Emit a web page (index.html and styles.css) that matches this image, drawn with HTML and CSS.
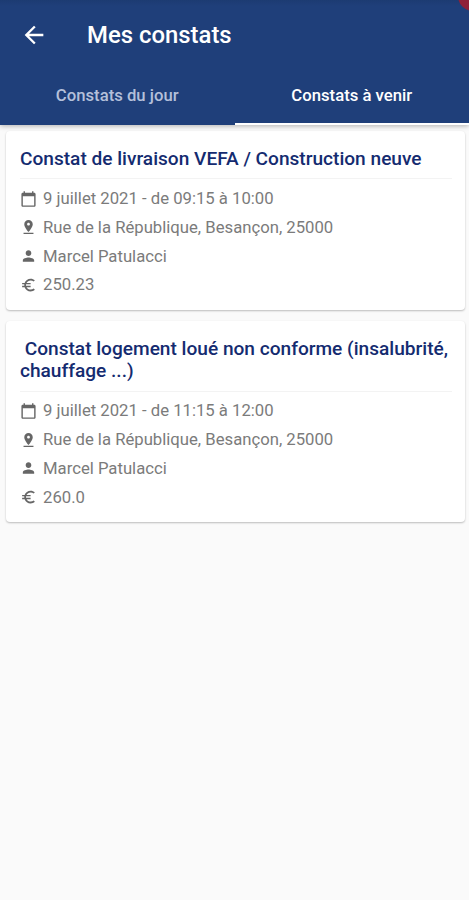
FILE: index.html
```html
<!DOCTYPE html>
<html lang="fr">
<head>
  <meta charset="UTF-8" />
  <meta name="viewport" content="width=device-width, initial-scale=1" />
  <title>Mes constats</title>
  <link rel="stylesheet" href="styles.css">
</head>
<body>
  <svg class="sprite" aria-hidden="true">
    <symbol id="icon-date" viewBox="0 0 24 24"><path d="M20 3h-1V1h-2v2H7V1H5v2H4c-1.1 0-2 .9-2 2v16c0 1.1.9 2 2 2h16c1.1 0 2-.9 2-2V5c0-1.1-.9-2-2-2zm0 18H4V8h16v13z"/></symbol>
    <symbol id="icon-place" viewBox="0 0 24 24"><path d="M18 8c0-3.310-2.690-6-6-6S6 4.690 6 8c0 4.500 6 11 6 11s6-6.500 6-11zm-8 0c0-1.100.9-2 2-2s2 .9 2 2-.890 2-2 2c-1.100 0-2-.9-2-2zM5 20v2h14v-2H5z"/></symbol>
    <symbol id="icon-person" viewBox="0 0 24 24"><path d="M12 12c2.210 0 4-1.790 4-4s-1.790-4-4-4-4 1.790-4 4 1.790 4 4 4zm0 2c-2.670 0-8 1.340-8 4v2h16v-2c0-2.660-5.330-4-8-4z"/></symbol>
    <symbol id="icon-euro" viewBox="0 0 24 24"><path d="M15 18.500c-2.510 0-4.680-1.420-5.760-3.500H15v-2H8.580c-.050-.330-.080-.660-.080-1s.030-.670.080-1H15V9H9.240C10.320 6.920 12.500 5.500 15 5.500c1.610 0 3.090.590 4.230 1.570L21 5.300C19.410 3.870 17.300 3 15 3c-3.920 0-7.240 2.510-8.480 6H3v2h3.060c-.040.330-.060.660-.060 1s.020.670.060 1H3v2h3.520c1.240 3.490 4.560 6 8.480 6 2.310 0 4.410-.870 6-2.300l-1.780-1.770c-1.130.980-2.600 1.570-4.220 1.570z"/></symbol>
  </svg>

  <header>
    <div class="corner-mark"></div>
    <div class="toolbar">
      <svg class="back" viewBox="0 0 24 24"><path d="M20 11H7.830l5.590-5.590L12 4l-8 8 8 8 1.410-1.410L7.830 13H20v-2z"/></svg>
      <h1>Mes constats</h1>
    </div>
    <nav class="tabs">
      <a class="tab">Constats du jour</a>
      <a class="tab active">Constats à venir</a>
    </nav>
  </header>

  <main>
    <article class="card">
      <h2>Constat de livraison VEFA / Construction neuve</h2>
      <ul>
        <li><svg><use href="#icon-date"/></svg><span>9 juillet 2021 - de 09:15 à 10:00</span></li>
        <li><svg><use href="#icon-place"/></svg><span>Rue de la République, Besançon, 25000</span></li>
        <li><svg><use href="#icon-person"/></svg><span>Marcel Patulacci</span></li>
        <li><svg><use href="#icon-euro"/></svg><span>250.23</span></li>
      </ul>
    </article>

    <article class="card">
      <h2>&nbsp;Constat logement loué non conforme (insalubrité, chauffage ...)</h2>
      <ul>
        <li><svg><use href="#icon-date"/></svg><span>9 juillet 2021 - de 11:15 à 12:00</span></li>
        <li><svg><use href="#icon-place"/></svg><span>Rue de la République, Besançon, 25000</span></li>
        <li><svg><use href="#icon-person"/></svg><span>Marcel Patulacci</span></li>
        <li><svg><use href="#icon-euro"/></svg><span>260.0</span></li>
      </ul>
    </article>
  </main>
</body>
</html>
```
FILE: styles.css
```css
:root {
  --primary-color: #1f3f7a;
  --title-color: #142b70;
  --background-color: #fafafa;
  --text-color: #7b7b7b;
  --icon-color: #666;
}
* {
  box-sizing: border-box;
}
body {
  margin: 0;
  min-height: 100vh;
  font-family: Roboto, sans-serif;
  background: var(--background-color);
  color: var(--text-color);
}
.sprite {
  display: none;
}
header {
  position: relative;
  overflow: hidden;
  height: 125px;
  background: linear-gradient(#1c3b72, var(--primary-color) 6px);
  box-shadow: 0 1px 5px rgba(0,0,0,0.3);
  color: white;
}
main {
  display: flex;
  flex-direction: column;
  gap: 11px;
  padding: 6px 4px 0 6px;
}
.corner-mark {
  position: absolute;
  top: -19px;
  right: -19px;
  width: 30px;
  height: 30px;
  border-radius: 50%;
  background: #8f2038;
}
.toolbar {
  display: flex;
  align-items: center;
  height: 68px;
  padding: 2px 0 0 20px;
}
.back {
  width: 28px;
  height: 28px;
  fill: white;
}
h1 {
  margin: 0 0 0 39px;
  font-size: 23.9px;
  font-weight: 500;
  line-height: 28px;
}
.tabs {
  display: flex;
  height: 57px;
}
.tab {
  flex: 1;
  padding-top: 18px;
  border-bottom: 2px solid transparent;
  text-align: center;
  font-size: 16.7px;
  font-weight: 500;
  line-height: 20px;
  color: #b4c0da;
}
.tab.active {
  border-color: white;
  color: white;
}
.card {
  padding: 17px 14px 11px;
  background: white;
  border-radius: 4px;
  box-shadow: 0 1px 2px rgba(0,0,0,0.25);
}
h2 {
  margin: 0 -1px 0 0;
  padding-bottom: 8px;
  border-bottom: 1px solid #f3f3f3;
  font-size: 19.1px;
  font-weight: 500;
  line-height: 22.3px;
  color: var(--title-color);
}
ul {
  margin: 0;
  padding: 5px 0 0;
  list-style: none;
}
li {
  display: flex;
  align-items: center;
  gap: 6px;
  height: 28.7px;
  font-size: 16.7px;
}
li svg {
  width: 17px;
  height: 18px;
  fill: var(--icon-color);
}
```
